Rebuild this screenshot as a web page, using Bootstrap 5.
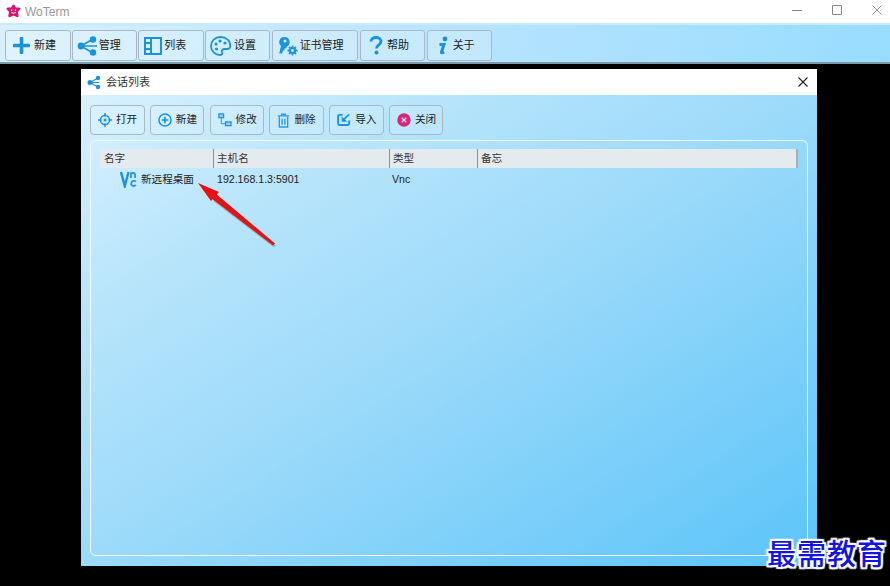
<!DOCTYPE html>
<html lang="zh">
<head>
<title>WoTerm</title>
<meta charset="utf-8">
<link href="https://cdn.jsdelivr.net/npm/bootstrap@5.3.3/dist/css/bootstrap.min.css" rel="stylesheet">
<script src="https://cdn.jsdelivr.net/npm/bootstrap@5.3.3/dist/js/bootstrap.bundle.min.js"></script>
<style>
html, body { height: 586px; overflow: hidden; background: #000; }
body { font-family: "Liberation Sans", "Noto Sans CJK SC", sans-serif; font-size: 11px; color: #222; position: relative; }
.win-title { height: 23px; background: #fff; color: #999; font-size: 12px; padding-left: 6px; gap: 4px; }
.win-ctrl { margin-left: auto; margin-bottom: 4px; padding-right: 8px; gap: 30px; }
.win-ctrl svg { display: block; }
.tool-bar { height: 41px; padding: 5px 5px 0; gap: 1.17px; background: linear-gradient(100deg, #d8f0ff 0%, #b8e4fd 50%, #98dcff 100%); border-top: 2px solid #c6ebff; border-bottom: 2px solid #7d9aaa; }
.tool-btn { width: 65.5px; height: 31px; padding: 0 0 0 4px; gap: 3px; font-size: 11px; color: #222; background: rgba(255,255,255,.2); border: 1px solid #a9b9c4; border-radius: 3px; justify-content: flex-start; }
.tb-new { padding-left: 7px; gap: 4px; }
.tb-manage { gap: 1px; }
.tb-list { padding-left: 5px; gap: 2px; }
.tb-cert { width: 86px; padding-left: 5px; gap: 2px; margin-right: 1.2px; }
.tb-help { padding-left: 8px; gap: 4px; }
.tb-about { padding-left: 9px; gap: 5px; }
.desk { height: 522px; background: #000; }
.dlg { position: absolute; left: 81px; top: 69px; width: 736px; height: 497px; }
.dlg-title { height: 26px; background: #fff; padding: 0 9px 0 6px; gap: 4px; font-size: 11px; color: #333; }
.dlg-body { height: 471px; background: linear-gradient(to bottom right, #d8f1ff 0%, #b6e4fb 25%, #9cdafa 50%, #5bc4f9 100%); padding: 10px 9px; }
.dlg-tools { gap: 5.3px; height: 30px; margin-bottom: 5px; }
.dlg-btn { width: 54.5px; height: 30px; padding: 0 0 0 7px; gap: 4px; font-size: 10.6px; color: #222; background: rgba(255,255,255,.12); border: 1px solid #a9b9c4; border-radius: 4px; justify-content: flex-start; }
.list-box { height: 416px; border: 1.5px solid #f2fbff; border-radius: 6px; padding: 8px 9px; font-size: 10.6px; }
.list-head { height: 19px; background: #e4ebef; color: #333; border-right: 2px solid #a8b0b4; }
.list-head > div { border-right: 1px solid #8b9297; padding-left: 3px; line-height: 19px; }
.list-head > .col-a { padding-left: 4px; }
.col-a { width: 114px; flex: none; }
.col-b { width: 176px; flex: none; }
.col-c { width: 88px; flex: none; }
.list-row { height: 20px; margin-top: 1px; line-height: 20px; color: #222; }
.list-row > div { padding-left: 3px; }
.list-row > .col-c { padding-left: 2px; }
.name-cell { padding-left: 20px !important; gap: 4px; }
.vnc-mark { width: 17px; height: 18px; flex: none; }
.arrow-over { position: absolute; left: 190px; top: 175px; pointer-events: none; }
.stamp { position: absolute; left: 767px; top: 537px; font-family: "Liberation Serif", "Noto Sans CJK SC", serif; font-weight: 500; font-size: 29px; line-height: 36px; letter-spacing: 1px; color: #1414e0; white-space: nowrap; text-shadow: 2px 0 1px #fff, -2px 0 1px #fff, 0 2px 1px #fff, 0 -2px 1px #fff, 2px 2px 1px #fff, -2px -2px 1px #fff, 2px -2px 1px #fff, -2px 2px 1px #fff; }
</style>
</head>
<body>

<!-- title bar -->
<div class="win-title d-flex align-items-center">
  <svg width="15" height="15" viewBox="0 0 15 15"><path d="M7.500 .5c1.200 0 1.800 2.200 2.500 3.100 1.200.1 4.500-.2 4.500 1 0 1.300-1.900 2.500-2.600 3.500.2 1.200 1.400 4.200.3 5-1.100.6-3.200-1.200-4.700-1.400-1.500.2-3.600 2-4.700 1.400-1.100-.8.1-3.800.3-5C2.400 7.100.5 5.900.5 4.600c0-1.200 3.300-.9 4.500-1C5.700 2.700 6.300.5 7.500.5z" fill="#d3186f"/><circle cx="5.600" cy="6.300" r=".8" fill="#fff"/><circle cx="9.400" cy="6.300" r=".8" fill="#fff"/><path d="M5.300 8.400q2.200 1.800 4.400 0" stroke="#fff" fill="none"/></svg>
  <span>WoTerm</span>
  <div class="win-ctrl d-flex align-items-center">
    <svg width="10" height="10" viewBox="0 0 10 10"><path d="M0 5.500h10" stroke="#888"/></svg>
    <svg width="10" height="10" viewBox="0 0 10 10"><path d="M.5.5h9v9h-9z" stroke="#888" fill="none"/></svg>
    <svg width="10" height="10" viewBox="0 0 10 10"><path d="M.5.5l9 9M9.500.5l-9 9" stroke="#999" fill="none"/></svg>
  </div>
</div>

<!-- toolbar -->
<div class="tool-bar d-flex align-items-start">
  <button class="btn tool-btn tb-new d-flex align-items-center"><svg width="17" height="17" viewBox="0 0 17 17"><path d="M8.500 1.500v14M1.500 8.500h14" stroke="#1c93d8" stroke-width="3.600" stroke-linecap="round"/></svg>新建</button>
  <button class="btn tool-btn tb-manage d-flex align-items-center"><svg width="21" height="20" viewBox="0 0 21 20"><path d="M4 10L16 3M4 10l12 7M4 10h16" stroke="#1c93d8" stroke-width="1.600"/><circle cx="4" cy="10" r="3.400" fill="#1c93d8"/><circle cx="16" cy="3.500" r="3.200" fill="#1c93d8"/><circle cx="16" cy="16.500" r="3.200" fill="#1c93d8"/></svg>管理</button>
  <button class="btn tool-btn tb-list d-flex align-items-center"><svg width="18" height="18" viewBox="0 0 18 18"><path d="M1 1h16v16H1zM7 1v16M1 6h6M1 12h6" stroke="#1c93d8" stroke-width="2" fill="none"/></svg>列表</button>
  <button class="btn tool-btn d-flex align-items-center"><svg width="21" height="20" viewBox="0 0 21 20"><path d="M10.500 1C5 1 1 5 1 10s4 9 9 9c2.500 0 2.500-1.500 2-3s.5-3 2.500-3H18c1.500 0 2.300-1 2.300-3.500C20.300 4.500 16 1 10.500 1z" fill="none" stroke="#1c93d8" stroke-width="1.800"/><circle cx="6" cy="8" r="1.600" fill="#1c93d8"/><circle cx="10" cy="5" r="1.600" fill="#1c93d8"/><circle cx="15" cy="7" r="1.600" fill="#1c93d8"/><circle cx="6.500" cy="13" r="1.600" fill="#1c93d8"/></svg>设置</button>
  <button class="btn tool-btn tb-cert d-flex align-items-center"><svg width="20" height="20" viewBox="0 0 20 20"><path d="M6.500 1A5 5 0 0 1 9 10.400L8 12.500H6.500V14.500H5L4 17.500H1.200L3 9.800A5 5 0 0 1 6.500 1z" fill="#1c93d8"/><circle cx="7" cy="5" r="1.500" fill="#d2eeff"/><circle cx="14.500" cy="14.500" r="2.500" fill="none" stroke="#1c93d8" stroke-width="2.200"/><path d="M14.500 9.500v2M14.500 17.500v2M9.500 14.500h2M17.500 14.500h2M11 11l1.400 1.400M16.600 16.600L18 18M11 18l1.400-1.400M16.600 12.400L18 11" stroke="#1c93d8" stroke-width="1.800"/></svg>证书管理</button>
  <button class="btn tool-btn tb-help d-flex align-items-center"><svg width="14" height="19" viewBox="0 0 14 19"><path d="M2 5.500C2 3 4 1.500 7 1.500s5 1.700 5 3.800c0 3.500-4.500 3.500-4.500 7.200" fill="none" stroke="#1c93d8" stroke-width="2.800"/><circle cx="7.500" cy="16.500" r="2" fill="#1c93d8"/></svg>帮助</button>
  <button class="btn tool-btn tb-about d-flex align-items-center"><svg width="11" height="20" viewBox="0 0 11 20"><circle cx="8" cy="3" r="2.400" fill="#1c93d8"/><path d="M2.500 8.500H7L4.500 16c-.3 1 .5 1.300 2.500 0" fill="none" stroke="#1c93d8" stroke-width="3"/></svg>关于</button>
</div>

<div class="desk"></div>

<!-- session dialog -->
<div class="dlg d-flex flex-column">
  <div class="dlg-title d-flex align-items-center">
    <svg width="15" height="15" viewBox="0 0 15 15"><path d="M3 7.500L11 3M3 7.500l8 4.500M3 7.500h9" stroke="#1c93d8" stroke-width="1.200"/><circle cx="3" cy="7.500" r="2.500" fill="#1c93d8"/><circle cx="11" cy="3" r="2.200" fill="#1c93d8"/><circle cx="11" cy="12" r="2.200" fill="#1c93d8"/></svg>
    <span>会话列表</span>
    <svg class="ms-auto" width="10" height="10" viewBox="0 0 10 10"><path d="M.5.5l9 9M9.500.5l-9 9" stroke="#222" stroke-width="1.100" fill="none"/></svg>
  </div>
  <div class="dlg-body">
    <div class="dlg-tools d-flex">
      <button class="btn dlg-btn d-flex align-items-center"><svg width="14" height="14" viewBox="0 0 16 16"><circle cx="8" cy="8" r="5.200" fill="none" stroke="#1c93d8" stroke-width="1.700"/><circle cx="8" cy="8" r="1.800" fill="#1c93d8"/><path d="M8 0v4M8 12v4M0 8h4M12 8h4" stroke="#1c93d8" stroke-width="1.700"/></svg>打开</button>
      <button class="btn dlg-btn d-flex align-items-center"><svg width="14" height="14" viewBox="0 0 15 15"><circle cx="7.500" cy="7.500" r="6.500" fill="none" stroke="#1c93d8" stroke-width="1.600"/><path d="M7.500 4v7M4 7.500h7" stroke="#1c93d8" stroke-width="1.800"/></svg>新建</button>
      <button class="btn dlg-btn d-flex align-items-center"><svg width="14" height="14" viewBox="0 0 15 15"><path d="M1 1h5v4H1z" fill="#8fd0f3" stroke="#1c93d8" stroke-width="1.300"/><path d="M8 9.500h6v4H8z" fill="#8fd0f3" stroke="#1c93d8" stroke-width="1.300"/><path d="M3.500 5v6.500H8" fill="none" stroke="#1c93d8"/></svg>修改</button>
      <button class="btn dlg-btn d-flex align-items-center"><svg width="13" height="15" viewBox="0 0 14 16"><path d="M1 3h12M5 3V1.200h4V3" fill="none" stroke="#2b9ddf" stroke-width="1.500"/><path d="M2.500 3.500v11.500h9V3.500M5.500 6v6.500M8.500 6v6.500" fill="none" stroke="#2b9ddf" stroke-width="1.500"/></svg>删除</button>
      <button class="btn dlg-btn d-flex align-items-center"><svg width="14" height="14" viewBox="0 0 15 15"><path d="M6 2H2.500Q1.200 2 1.200 3.300v8.200q0 1.300 1.300 1.300h9.200q1.300 0 1.300-1.300V8" fill="none" stroke="#1c93d8" stroke-width="2"/><path d="M13 1.500L7.500 6.500" stroke="#1c93d8" stroke-width="1.800"/><path d="M5 3.500V9.500h6z" fill="#1c93d8"/></svg>导入</button>
      <button class="btn dlg-btn d-flex align-items-center"><svg width="14" height="14" viewBox="0 0 15 15"><circle cx="7.500" cy="7.500" r="7.200" fill="#d9257a"/><path d="M5 5l5 5M10 5l-5 5" stroke="#f4d5e4" stroke-width="1.500"/></svg>关闭</button>
    </div>
    <div class="list-box">
      <div class="list-head d-flex">
        <div class="col-a">名字</div>
        <div class="col-b">主机名</div>
        <div class="col-c">类型</div>
        <div class="border-0">备忘</div>
      </div>
      <div class="list-row d-flex">
        <div class="col-a name-cell d-flex align-items-center">
          <svg class="vnc-mark" viewBox="0 0 17 18"><path d="M1 2l3.800 14L8.500 2" fill="none" stroke="#1c93d8" stroke-width="2.400"/><path d="M11 8V2.500M11 4c1-1.500 4-1.500 4 .5V8" fill="none" stroke="#1c93d8" stroke-width="1.700"/><path d="M16 11.500c-1-1.200-4.800-1-4.800 1.900s3.800 3 4.800 1.700" fill="none" stroke="#1c93d8" stroke-width="1.700"/></svg>
          <span class="text-nowrap">新远程桌面</span>
        </div>
        <div class="col-b">192.168.1.3:5901</div>
        <div class="col-c">Vnc</div>
      </div>
    </div>
  </div>
</div>

<!-- annotation arrow -->
<svg class="arrow-over" width="90" height="75" viewBox="0 0 90 75">
  <path d="M25 19L85 68.500L83 70.500L22 24z" fill="#000" fill-opacity=".2" transform="translate(1 2)"/>
  <path d="M25 18L85 68.500L83 70.500L21 23z" fill="#e01414"/>
  <path d="M8 8L29 17L21 26z" fill="#e81010"/>
</svg>

<div class="stamp">最需教育</div>

</body>
</html>
